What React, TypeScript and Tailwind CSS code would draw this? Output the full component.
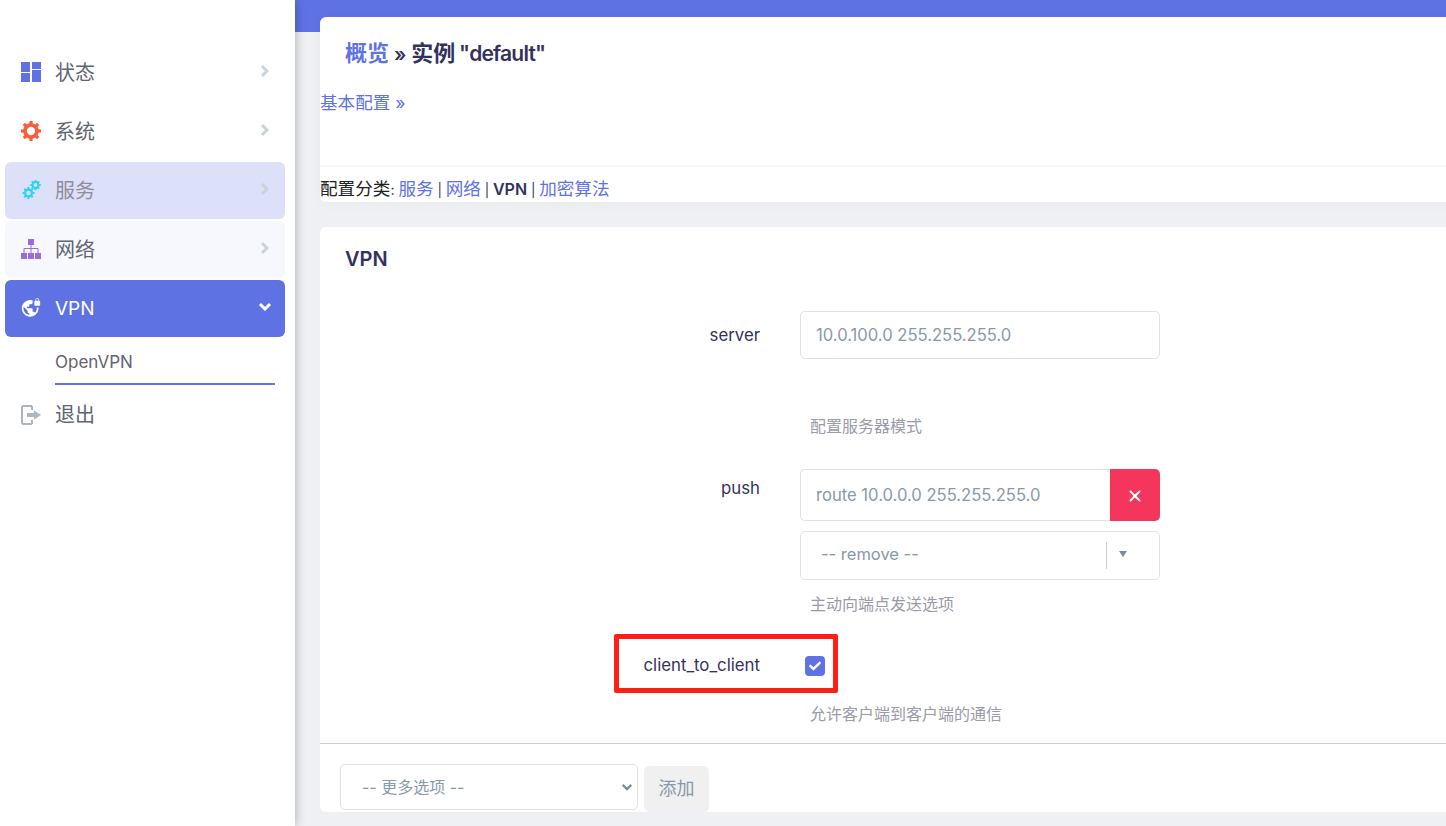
import React from "react";
import { FaCheck } from "react-icons/fa";
import { MdVpnLock } from "react-icons/md";
import { X } from "lucide-react";

const font = "font-['Inter','Noto_Sans_CJK_SC',sans-serif]";

function Dash() {
  return (
    <svg width="20" height="20" viewBox="0 0 20 20" fill="#5e72e4">
      <rect x="0" y="0" width="9" height="10" />
      <rect x="0" y="11" width="9" height="9" />
      <rect x="11" y="0" width="9" height="7" />
      <rect x="11" y="8" width="9" height="12" />
    </svg>
  );
}

function GearShape({ cx, cy, r, ring, tooth, color }: { cx: number; cy: number; r: number; ring: number; tooth: number; color: string }) {
  return (
    <g>
      <circle cx={cx} cy={cy} r={r} fill="none" stroke={color} strokeWidth={ring} />
      {[0, 45, 90, 135, 180, 225, 270, 315].map((a) => (
        <rect key={a} x={cx - tooth / 2} y={cy - r - ring / 2 - tooth * 0.75} width={tooth} height={tooth} fill={color} transform={`rotate(${a} ${cx} ${cy})`} />
      ))}
    </g>
  );
}

function Cog() {
  return (
    <svg width="20" height="20" viewBox="0 0 20 20">
      <GearShape cx={10} cy={10} r={6} ring={3.6} tooth={3.2} color="#fb5b36" />
    </svg>
  );
}

function Gears() {
  return (
    <svg width="20" height="20" viewBox="0 0 20 20">
      <GearShape cx={7.5} cy={13} r={3.4} ring={2.2} tooth={2} color="#29d3f5" />
      <GearShape cx={14.5} cy={5} r={2.9} ring={2} tooth={1.8} color="#29d3f5" />
    </svg>
  );
}

function Sitemap() {
  return (
    <svg width="20" height="20" viewBox="0 0 20 20" fill="#9a6bdc">
      <rect x="7" y="0" width="6" height="6" />
      <rect x="0" y="14" width="6" height="6" />
      <rect x="7" y="14" width="6" height="6" />
      <rect x="14" y="14" width="6" height="6" />
      <path d="M10 6V14M3 14V9.5H17V14" fill="none" stroke="#9a6bdc" strokeWidth="1" />
    </svg>
  );
}

function Logout() {
  return (
    <svg width="20" height="20" viewBox="0 0 20 20" fill="none" stroke="#adb5bd">
      <path d="M11 1H2.2Q1 1 1 2.2V17.8Q1 19 2.2 19H11" strokeWidth="2" />
      <path d="M11 1V5M11 15V19" strokeWidth="2" />
      <path d="M6 8H13V5.5L20 10L13 14.5V12H6Z" fill="#adb5bd" stroke="none" />
    </svg>
  );
}

function ChevronRight() {
  return (
    <svg className="mb-[3px] mr-[1px]" width="9" height="14" viewBox="0 0 9 14" fill="none" stroke="#cbd3da" strokeWidth="3">
      <path d="M2 2L7 7L2 12" />
    </svg>
  );
}

function ChevronDown({ color = "#ffffff", w = 14, h = 9, sw = 3 }: { color?: string; w?: number; h?: number; sw?: number }) {
  return (
    <svg className="block" width={w} height={h} viewBox="0 0 14 9" fill="none" stroke={color} strokeWidth={sw}>
      <path d="M2 2L7 7L12 2" />
    </svg>
  );
}

function NavItem({ icon, label, bg = "", text = "text-[#5f6470]", active = false, size = "text-[20px]" }: { icon: React.ReactNode; label: string; bg?: string; text?: string; active?: boolean; size?: string }) {
  return (
    <div className={`flex h-[57px] items-center rounded-md pl-4 pr-[10px] ${bg}`}>
      <span className="mb-[2px] flex w-5 items-center justify-center">{icon}</span>
      <span className={`ml-[14px] flex-1 leading-none ${size} ${text}`}>{label}</span>
      <span className="flex w-5 justify-center">
        {active ? <span className="mb-[5px]"><ChevronDown /></span> : <ChevronRight />}
      </span>
    </div>
  );
}

function Sidebar() {
  return (
    <aside className="relative z-10 h-full w-[295px] shrink-0 bg-white pl-[5px] pr-[10px] pt-[44px] shadow-[0_0_10px_rgba(0,0,0,0.3)]">
      <div className="flex flex-col gap-[2px]">
        <NavItem icon={<Dash />} label="状态" />
        <NavItem icon={<Cog />} label="系统" />
        <NavItem icon={<Gears />} label="服务" bg="bg-[#dde0f9]" text="text-[#8d8d9b]" />
        <NavItem icon={<Sitemap />} label="网络" bg="bg-[#f7f8fd]" />
        <NavItem icon={<MdVpnLock className="text-[23px] text-white" />} label="VPN" bg="bg-[#5e72e4]" text="text-white" size="text-[19px]" active />
      </div>
      <div className="ml-[50px] mr-[10px] flex h-[48px] items-center border-b-2 border-[#5e72e4] pt-[5px] text-[17px] text-[#5f6470]">OpenVPN</div>
      <div className="mt-[1px]">
        <div className="flex h-[57px] items-center pl-4">
          <Logout />
          <span className="ml-[14px] text-[20px] leading-none text-[#5f6470]">退出</span>
        </div>
      </div>
    </aside>
  );
}

function Label({ children, pt }: { children: React.ReactNode; pt: string }) {
  return <div className={`w-[480px] shrink-0 pr-[40px] text-right text-[16.8px] leading-[24px] text-[#32325d] ${pt}`}>{children}</div>;
}

function Help({ children, mt }: { children: React.ReactNode; mt: string }) {
  return <div className={`ml-[490px] text-[16px] leading-[24px] text-[#9a9aa8] ${mt}`}>{children}</div>;
}

function Sep() {
  return <span className="text-[13.5px] text-[#32325d]"> | </span>;
}

function App() {
  return (
    <div className={`flex h-[826px] w-[1446px] overflow-hidden bg-[#eff0f3] ${font}`}>
      <Sidebar />
      <main className="min-w-0 flex-1">
        <div className="h-8 bg-[#5e72e4]" />
        <div className="relative -mt-[15px] w-[1200px] pl-[25px]">
          <section className="h-[185px] rounded-md bg-white shadow-[0_2px_12px_rgba(0,0,0,0.03)]">
            <h2 className="pl-[25px] pt-[21px] text-[22px] font-semibold leading-[30px] text-[#32325d]">
              <a className="text-[#5e72e4]">概览</a><span className="text-[19.5px]"> » </span>实例<span className="text-[15px]"> </span><span className="text-[21px] tracking-[-0.8px]">"default"</span>
            </h2>
            <div className="mt-[19px] text-[17.6px] leading-[26px] text-[#5e72e4]">基本配置 »</div>
            <div className="mt-[49px] border-t-2 border-[#f6f7f9] pt-[11px] text-[17.6px] leading-[22px] text-[#32325d]">
              <span className="text-[#222]">配置分类<span className="text-[14px]">: </span></span>
              <a className="text-[#5e72e4]">服务</a>
              <Sep />
              <a className="text-[#5e72e4]">网络</a>
              <Sep />
              <strong className="text-[16px] font-semibold">VPN</strong>
              <Sep />
              <a className="text-[#5e72e4]">加密算法</a>
            </div>
          </section>
          <section className="mt-[25px] h-[585px] rounded-md bg-white">
            <h3 className="pl-[25px] pt-[18px] text-[20px] font-semibold leading-[28px] text-[#32325d]">VPN</h3>
            <div className="mt-[38px]">
              <div className="flex">
                <Label pt="pt-[12px]">server</Label>
                <div className="flex h-[48px] w-[360px] items-center rounded-[5px] border border-[#dee2e6] px-[15px] text-[16.6px] text-[#8898aa]">10.0.100.0 255.255.255.0</div>
              </div>
              <Help mt="mt-[55px]">配置服务器模式</Help>
              <div className="mt-[31px] flex">
                <Label pt="pt-[7px]">push</Label>
                <div className="w-[360px]">
                  <div className="flex h-[52px]">
                    <div className="flex flex-1 items-center rounded-l-[5px] border border-r-0 border-[#dee2e6] px-[15px] text-[16.6px] text-[#8898aa]">route 10.0.0.0 255.255.255.0</div>
                    <button className="flex w-[50px] items-center justify-center rounded-r-[5px] bg-[#f5365c] pt-[1px] text-white"><X size={18} strokeWidth={2.6} /></button>
                  </div>
                  <div className="mt-[10px] flex h-[49px] items-center rounded-[5px] border border-[#dee2e6] pl-[20px] text-[16.5px] text-[#8898aa]">
                    <span className="mb-[3px] flex-1">-- remove --</span>
                    <span className="h-[27px] w-px bg-[#cccccc]" />
                    <span className="mb-[3px] ml-[12px] mr-[32px] h-0 w-0 border-x-[4px] border-t-[6px] border-x-transparent border-t-[#7b8a9a]" />
                  </div>
                </div>
              </div>
              <Help mt="mt-[12px]">主动向端点发送选项</Help>
              <div className="relative mt-[20px] flex h-[58px] items-center">
                <Label pt="">client_to_client</Label>
                <span className="ml-[5px] mt-[2px] flex h-5 w-5 items-center justify-center rounded-[4px] bg-[#5e72e4] text-white"><FaCheck className="text-[12px]" /></span>
                <div className="absolute left-[294px] top-[-2px] h-[59px] w-[224px] rounded-[2px] border-[5px] border-[#ff1f14]" />
              </div>
              <Help mt="mt-[8px]">允许客户端到客户端的通信</Help>
            </div>
            <div className="mt-[17px] flex items-start border-t border-[#cccccc] pl-[20px] pt-[20px]">
              <div className="flex h-[46px] w-[298px] items-center justify-between rounded-[5px] border border-[#dee2e6] pl-[21px] pr-[4px] text-[16px] text-[#8898aa]">
                <span>-- 更多选项 --</span>
                <ChevronDown color="#7b8a9a" w={12} h={8} sw={2.6} />
              </div>
              <button className="ml-[6px] mt-[2px] h-[46px] w-[65px] rounded-[5px] bg-[#f0f0f0] pb-[2px] text-[18px] text-[#8898aa]">添加</button>
            </div>
          </section>
        </div>
      </main>
    </div>
  );
}

export default App;
